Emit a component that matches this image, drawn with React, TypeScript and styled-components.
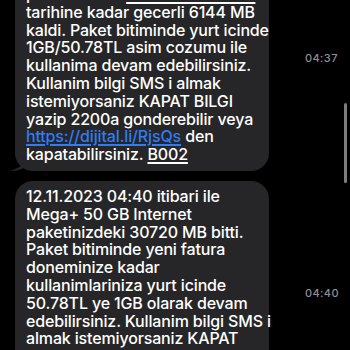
import React from 'react';
import styled, { createGlobalStyle } from 'styled-components';

const GlobalStyle = createGlobalStyle`
    html, body {
        margin: 0;
        padding: 0;
        background: #000000;
    }
    body {
        width: 350px;
        height: 350px;
        overflow: hidden;
        font-family: Inter, "Liberation Sans", sans-serif;
    }
`;

type Piece = { text: string; kind?: 'link' | 'underline' };
type Line = Piece[];

interface Message {
    time: string;
    timeOffset: number;
    tail: boolean;
    lines: Line[];
}

const MESSAGES: Message[] = [
    {
        time: '04:37',
        timeOffset: 72,
        tail: true,
        lines: [
            [{ text: 'paketinizden ' }, { text: '13.12.2023 00:00', kind: 'underline' }],
            [{ text: 'tarihine kadar gecerli 6144 MB' }],
            [{ text: 'kaldi. Paket bitiminde yurt icinde' }],
            [{ text: '1GB/50.78TL asim cozumu ile' }],
            [{ text: 'kullanima devam edebilirsiniz.' }],
            [{ text: 'Kullanim bilgi SMS i almak' }],
            [{ text: 'istemiyorsaniz KAPAT BILGI' }],
            [{ text: 'yazip 2200a gonderebilir veya' }],
            [{ text: 'https://dijital.li/RjsQs', kind: 'link' }, { text: ' den' }],
            [{ text: 'kapatabilirsiniz. ' }, { text: 'B002', kind: 'underline' }],
        ],
    },
    {
        time: '04:40',
        timeOffset: 105,
        tail: false,
        lines: [
            [{ text: '12.11.2023 04:40 itibari ile' }],
            [{ text: 'Mega+ 50 GB Internet' }],
            [{ text: 'paketinizdeki 30720 MB bitti.' }],
            [{ text: 'Paket bitiminde yeni fatura' }],
            [{ text: 'doneminize kadar' }],
            [{ text: 'kullanimlariniza yurt icinde' }],
            [{ text: '50.78TL ye 1GB olarak devam' }],
            [{ text: 'edebilirsiniz. Kullanim bilgi SMS i' }],
            [{ text: 'almak istemiyorsaniz KAPAT' }],
            [{ text: 'BILGI yazip 2200a gonderebilir veya' }],
        ],
    },
];

const MessageRow: React.FC<{ message: Message }> = ({ message }) => (
    <Row>
        <Bubble>
            {message.lines.map((line, i) => (
                <TextLine key={i}>
                    {line.map((piece, j) =>
                        piece.kind ? (
                            <Marked key={j} $link={piece.kind === 'link'}>
                                {piece.text}
                            </Marked>
                        ) : (
                            <span key={j}>{piece.text}</span>
                        ),
                    )}
                </TextLine>
            ))}
            {message.tail && (
                <Tail viewBox="0 0 16 14" width="16" height="14">
                    <path d="M16 0 C14 6 10 10 0 13 C6 13 12 12 16 8 Z" fill="#262628" />
                </Tail>
            )}
        </Bubble>
        <Time $offset={message.timeOffset}>{message.time}</Time>
    </Row>
);

export default function App() {
    return (
        <>
            <GlobalStyle />
            <Screen>
                <Thread>
                    {MESSAGES.map((m, i) => (
                        <MessageRow key={i} message={m} />
                    ))}
                </Thread>
                <ScrollThumb />
            </Screen>
        </>
    );
}

const Screen = styled.div`
    position: relative;
    width: 350px;
    height: 350px;
    overflow: hidden;
    background: #000000;
`;

const Thread = styled.div`
    display: flex;
    flex-direction: column;
    gap: 10px;
    margin-top: -21px;
    padding-left: 15px;
`;

const Row = styled.div`
    display: flex;
    align-items: flex-start;
`;

const Bubble = styled.div`
    position: relative;
    width: 254px;
    box-sizing: border-box;
    padding: 7px 8px 7px 11px;
    background: #262628;
    border-radius: 18px;
    color: #ffffff;
    font-size: 16px;
    font-weight: 500;
    letter-spacing: -0.15px;
    line-height: 17.8px;
`;

const TextLine = styled.div`
    white-space: nowrap;
`;

const Marked = styled.span<{ $link: boolean }>`
    color: ${({ $link }) => ($link ? '#2f7cf6' : '#ffffff')};
    text-decoration: underline;
    text-decoration-thickness: 1.5px;
    text-underline-offset: 2px;
`;

const Tail = styled.svg`
    position: absolute;
    left: -5px;
    bottom: -1px;
`;

const Time = styled.div<{ $offset: number }>`
    margin-top: ${({ $offset }) => $offset}px;
    margin-left: 36px;
    color: #8e8e93;
    font-size: 11px;
    font-weight: 500;
    letter-spacing: 0.4px;
`;

const ScrollThumb = styled.div`
    position: absolute;
    right: 3px;
    top: 103px;
    width: 3px;
    height: 80px;
    border-radius: 2px;
    background: #7d7d80;
`;
